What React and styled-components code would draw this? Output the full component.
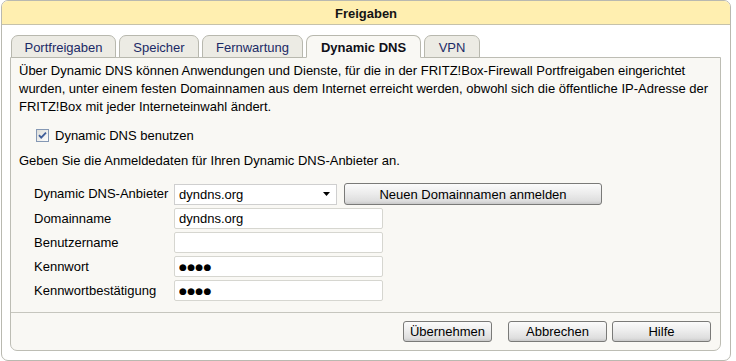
import React from "react";
import styled, { createGlobalStyle } from "styled-components";

const Global = createGlobalStyle`
  html, body { margin: 0; padding: 0; background: #ffffff; }
  body { font-family: "Liberation Sans", Arial, sans-serif; font-size: 13px; color: #000; }
  * { box-sizing: border-box; }
`;

const Panel = styled.div`
  margin-left: 1px;
  width: 730px;
  border: 1px solid #b9b9b0;
  border-radius: 7px;
  overflow: hidden;
  background: #fff;
`;

const Header = styled.div`
  height: 24px;
  background: #ffefb0;
  border-bottom: 1px solid #c6c2aa;
  display: flex;
  align-items: center;
  justify-content: center;
  font-weight: bold;
  font-size: 13px;
  color: #141414;
  padding-top: 1px;
`;

const Body = styled.div`
  padding: 10px 9px 9px 8px;
`;

const TabBar = styled.div`
  display: flex;
  align-items: flex-end;
  gap: 3px;
  padding-left: 1px;
  margin-bottom: -1px;
  position: relative;
  z-index: 1;
`;

const Tab = styled.div`
  width: ${(p) => p.$w}px;
  height: 23px;
  border: 1px solid #b8b8ae;
  border-bottom-color: ${(p) => (p.$active ? "#f9f8f4" : "#b8b8ae")};
  border-radius: 7px 7px 0 0;
  background: ${(p) => (p.$active ? "#f9f8f4" : "#ecebe4")};
  color: ${(p) => (p.$active ? "#101018" : "#1b2a66")};
  font-weight: ${(p) => (p.$active ? "bold" : "normal")};
  display: flex;
  align-items: center;
  justify-content: center;
  padding-top: 1px;
`;

const Box = styled.div`
  border: 1px solid #bdbdb4;
  border-radius: 0 0 7px 7px;
  background: #f9f8f4;
  display: flex;
  flex-direction: column;
`;

const Content = styled.div`
  padding: 4px 8px 0 8px;
`;

const Para = styled.p`
  margin: 0;
  line-height: 18px;
`;

const CheckRow = styled.div`
  margin-top: 10px;
  height: 18px;
  display: flex;
  align-items: center;
  padding-left: 17px;
  gap: 6px;
`;

const Hint = styled.div`
  margin-top: 8px;
  line-height: 18px;
`;

const Form = styled.div`
  margin-top: 13px;
  display: grid;
  grid-template-columns: 140px auto;
  row-gap: 3px;
  padding-left: 15px;
  align-items: center;
`;

const Label = styled.div`
  line-height: 18px;
`;

const FieldRow = styled.div`
  display: flex;
  align-items: center;
  gap: 7px;
`;

const Select = styled.div`
  width: 163px;
  height: 21px;
  background: #fff;
  border: 1px solid #cfcfcf;
  display: flex;
  align-items: center;
  justify-content: space-between;
  padding: 0 6px 0 4px;
`;

const Input = styled.input`
  width: 209px;
  height: 21px;
  border: 1px solid #d6d6d0;
  border-radius: 2px;
  background: #fff;
  padding: 0 4px;
  margin: 0;
  font-family: ${(p) => (p.$dots ? '"DejaVu Sans", sans-serif' : '"Liberation Sans", Arial, sans-serif')};
  font-size: ${(p) => (p.$dots ? "9px" : "13px")};
  letter-spacing: ${(p) => (p.$dots ? "0.3px" : "0")};
  color: #000;
  outline: none;
`;

const Button = styled.button`
  width: ${(p) => p.$w}px;
  height: ${(p) => p.$h || 21}px;
  margin: 0 0 0 ${(p) => p.$ml || 0}px;
  padding: 0;
  border: 1px solid #7a7a78;
  border-radius: 3px;
  background: linear-gradient(#fbfbfb 0%, #ededed 45%, #dedede 85%, #c9c9c9 100%);
  font-family: "Liberation Sans", Arial, sans-serif;
  font-size: 13px;
  color: #000;
`;

const Footer = styled.div`
  margin-top: 11px;
  border-top: 1px solid #c6c6be;
  padding: 8px 9px 8px 0;
  display: flex;
  justify-content: flex-end;
`;

function CheckBox() {
  return (
    <svg width="13" height="13" viewBox="0 0 13 13">
      <defs>
        <linearGradient id="cb" x1="0" y1="0" x2="1" y2="1">
          <stop offset="0" stopColor="#dcdcd7" />
          <stop offset="1" stopColor="#ffffff" />
        </linearGradient>
      </defs>
      <rect x="0.5" y="0.5" width="12" height="12" fill="url(#cb)" stroke="#8598b4" />
      <path d="M3 6.2 L5.2 8.6 L10 3.6" fill="none" stroke="#3f5d99" strokeWidth="1.8" />
    </svg>
  );
}

function Arrow() {
  return (
    <svg width="7" height="4" viewBox="0 0 7 4">
      <path d="M0 0 H7 L3.5 4 Z" fill="#000" />
    </svg>
  );
}

export default function App() {
  return (
    <>
      <Global />
      <Panel>
        <Header>Freigaben</Header>
        <Body>
          <TabBar>
            <Tab $w={105}>Portfreigaben</Tab>
            <Tab $w={80}>Speicher</Tab>
            <Tab $w={101}>Fernwartung</Tab>
            <Tab $w={115} $active>Dynamic DNS</Tab>
            <Tab $w={56}>VPN</Tab>
          </TabBar>
          <Box>
            <Content>
              <Para>
                Über Dynamic DNS können Anwendungen und Dienste, für die in der FRITZ!Box-Firewall Portfreigaben eingerichtet
                <br />
                wurden, unter einem festen Domainnamen aus dem Internet erreicht werden, obwohl sich die öffentliche IP-Adresse der
                <br />
                FRITZ!Box mit jeder Interneteinwahl ändert.
              </Para>
              <CheckRow>
                <CheckBox />
                <span>Dynamic DNS benutzen</span>
              </CheckRow>
              <Hint>Geben Sie die Anmeldedaten für Ihren Dynamic DNS-Anbieter an.</Hint>
              <Form>
                <Label>Dynamic DNS-Anbieter</Label>
                <FieldRow>
                  <Select>
                    <span>dyndns.org</span>
                    <Arrow />
                  </Select>
                  <Button $w={258} $h={22}>Neuen Domainnamen anmelden</Button>
                </FieldRow>
                <Label>Domainname</Label>
                <Input readOnly value="dyndns.org" />
                <Label>Benutzername</Label>
                <Input readOnly value="" />
                <Label>Kennwort</Label>
                <Input readOnly $dots value="●●●●" />
                <Label>Kennwortbestätigung</Label>
                <Input readOnly $dots value="●●●●" />
              </Form>
            </Content>
            <Footer>
              <Button $w={89}>Übernehmen</Button>
              <Button $w={99} $ml={16}>Abbrechen</Button>
              <Button $w={99} $ml={5}>Hilfe</Button>
            </Footer>
          </Box>
        </Body>
      </Panel>
    </>
  );
}
